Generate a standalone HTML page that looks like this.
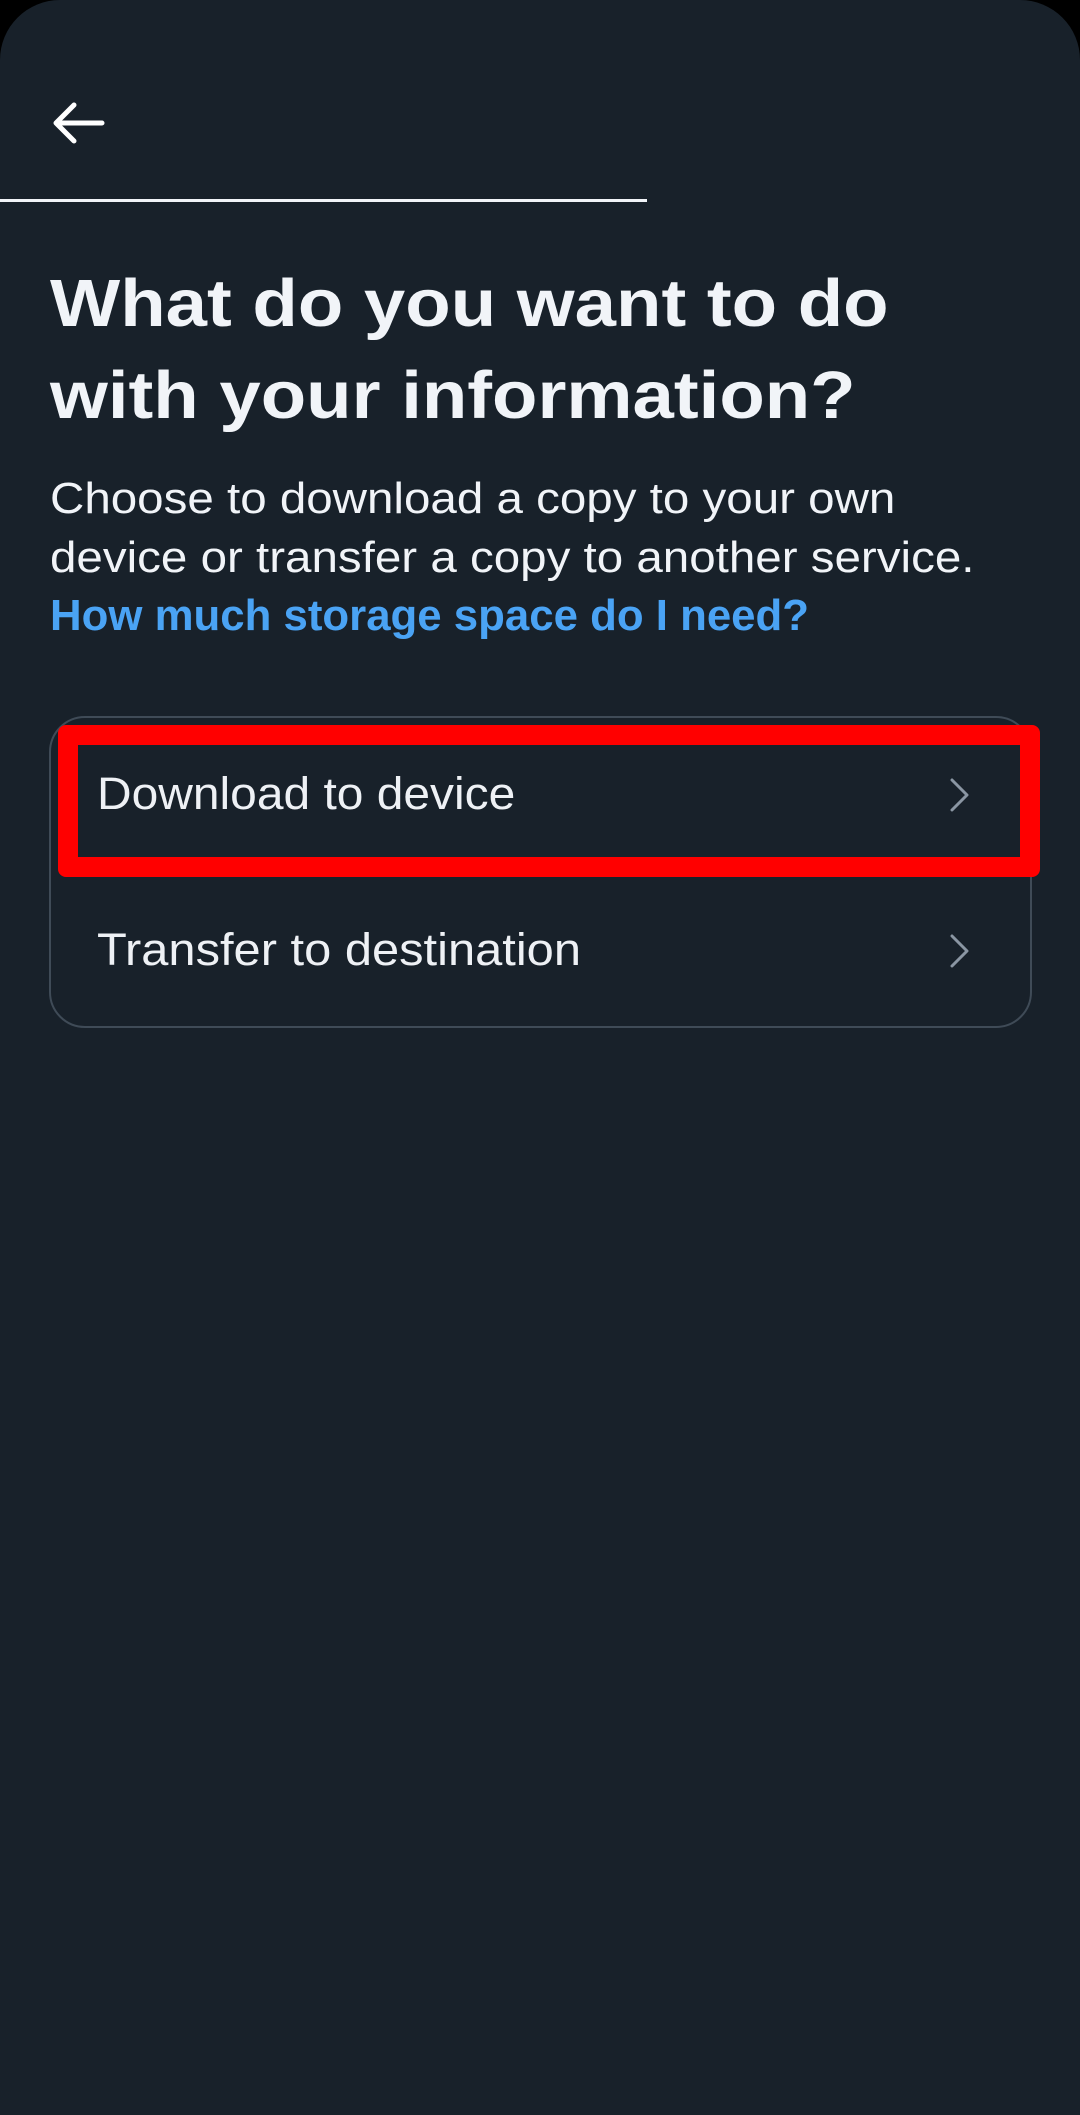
<!DOCTYPE html>
<html><head><meta charset="utf-8"><style>
html,body{margin:0;padding:0;background:#000;}
body{width:1080px;height:2115px;overflow:hidden;position:relative;font-family:"Liberation Sans",sans-serif;}
.screen{position:absolute;left:0;top:0;width:1080px;height:2115px;background:#18212a;border-radius:60px 60px 0 0;}
.t{position:absolute;left:50px;color:#f1f4f8;white-space:nowrap;transform-origin:0 0;}
.title{font-weight:bold;font-size:67px;}
.body{font-size:44px;}
.link{color:#4aa3f4;font-weight:bold;}
.card{position:absolute;left:49px;top:716px;width:983px;height:312px;border:2px solid #3f4b57;border-radius:36px;box-sizing:border-box;}
.red{position:absolute;left:58px;top:725px;width:982px;height:152px;border:20px solid #ff0000;border-radius:8px;box-sizing:border-box;}
.item{position:absolute;left:97px;font-size:45px;color:#eef1f5;white-space:nowrap;transform-origin:0 0;}
</style></head><body>
<div class="screen">
<svg style="position:absolute;left:50px;top:100px" width="56" height="46" viewBox="0 0 56 46"><path d="M52 23H6M24 5L6 23l18 18" fill="none" stroke="#fff" stroke-width="5" stroke-linecap="round" stroke-linejoin="round"/></svg>
<div style="position:absolute;left:0;top:199px;width:647px;height:3px;background:#f1f4f8"></div>
<div class="t title" style="top:265px;transform:scaleX(1.11)">What do you want to do</div>
<div class="t title" style="top:357px;transform:scaleX(1.11)">with your information?</div>
<div class="t body" style="top:474px;transform:scaleX(1.08)">Choose to download a copy to your own</div>
<div class="t body" style="top:533px;transform:scaleX(1.08)">device or transfer a copy to another service.</div>
<div class="t body link" style="top:591px;transform:scaleX(0.995)">How much storage space do I need?</div>
<div class="card"></div>
<div class="item" style="top:768px;transform:scaleX(1.065)">Download to device</div>
<div class="item" style="top:924px;transform:scaleX(1.085)">Transfer to destination</div>
<svg style="position:absolute;left:948px;top:778px" width="24" height="34" viewBox="0 0 24 34"><path d="M4 2l15 15L4 32" fill="none" stroke="#8a96a3" stroke-width="3" stroke-linecap="round" stroke-linejoin="round"/></svg>
<svg style="position:absolute;left:948px;top:934px" width="24" height="34" viewBox="0 0 24 34"><path d="M4 2l15 15L4 32" fill="none" stroke="#8a96a3" stroke-width="3" stroke-linecap="round" stroke-linejoin="round"/></svg>
<div class="red"></div>
</div>
</body></html>
